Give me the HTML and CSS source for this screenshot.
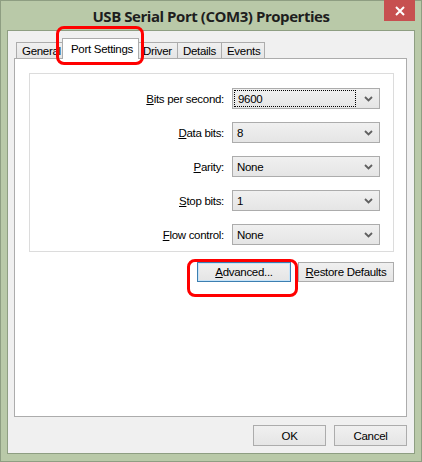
FILE: index.html
```html
<!DOCTYPE html>
<html>
<head>
<meta charset="utf-8">
<link rel="stylesheet" href="styles.css">
</head>
<body>
<div class="window">
  <div class="titlebar">
    <div class="title">USB Serial Port (COM3) Properties</div>
    <div class="close"><svg width="10" height="10" viewBox="0 0 10 10"><path d="M1 1 L9 9 M9 1 L1 9" stroke="#fff" stroke-width="2"/></svg></div>
  </div>
  <div class="client">
    <div class="tabs">
      <div class="tab t-general">General</div>
      <div class="tab selected">Port Settings</div>
      <div class="tab t-driver">Driver</div>
      <div class="tab t-details">Details</div>
      <div class="tab t-events">Events</div>
      <div class="mark mark-tab"></div>
    </div>
    <div class="panel">
      <div class="group">
        <label class="lbl"><u>B</u>its per second:</label>
        <div class="combo focus"><span class="val">9600</span><svg class="chev" width="9" height="6" viewBox="0 0 9 6"><path d="M1 1 L4.5 4.5 L8 1" fill="none" stroke="#606060" stroke-width="1.8"/></svg></div>
        <label class="lbl"><u>D</u>ata bits:</label>
        <div class="combo"><span class="val">8</span><svg class="chev" width="9" height="6" viewBox="0 0 9 6"><path d="M1 1 L4.5 4.5 L8 1" fill="none" stroke="#606060" stroke-width="1.8"/></svg></div>
        <label class="lbl"><u>P</u>arity:</label>
        <div class="combo"><span class="val">None</span><svg class="chev" width="9" height="6" viewBox="0 0 9 6"><path d="M1 1 L4.5 4.5 L8 1" fill="none" stroke="#606060" stroke-width="1.8"/></svg></div>
        <label class="lbl"><u>S</u>top bits:</label>
        <div class="combo"><span class="val">1</span><svg class="chev" width="9" height="6" viewBox="0 0 9 6"><path d="M1 1 L4.5 4.5 L8 1" fill="none" stroke="#606060" stroke-width="1.8"/></svg></div>
        <label class="lbl"><u>F</u>low control:</label>
        <div class="combo"><span class="val">None</span><svg class="chev" width="9" height="6" viewBox="0 0 9 6"><path d="M1 1 L4.5 4.5 L8 1" fill="none" stroke="#606060" stroke-width="1.8"/></svg></div>
      </div>
      <div class="panel-buttons">
        <div class="btn-wrap">
          <button class="btn default"><u>A</u>dvanced...</button>
          <div class="mark mark-btn"></div>
        </div>
        <button class="btn restore"><u>R</u>estore Defaults</button>
      </div>
    </div>
    <div class="dialog-buttons">
      <button class="btn dlg">OK</button>
      <button class="btn dlg">Cancel</button>
    </div>
  </div>
</div>
</body>
</html>
```
FILE: styles.css
```css
* { box-sizing: border-box; }
html, body { margin: 0; padding: 0; }
body {
  width: 422px;
  height: 462px;
  background: #b9c9a8;
  font-family: "Liberation Sans", Arial, sans-serif;
  font-size: 11.5px;
  letter-spacing: -0.3px;
  color: #000;
  overflow: hidden;
}
.window {
  position: relative;
  width: 422px;
  height: 462px;
  border: 1px solid #8e9e82;
  background: #b9c9a8;
  display: flex;
  flex-direction: column;
}
.titlebar {
  height: 29px;
  display: flex;
  align-items: center;
  justify-content: center;
}
.title {
  font-family: "Open Sans", sans-serif;
  font-weight: 700;
  font-size: 15px;
  color: #1e1e1e;
  letter-spacing: -0.45px;
  margin-top: 1px;
}
.close {
  position: absolute;
  top: -1px;
  right: 6px;
  width: 31px;
  height: 21px;
  background: #c75050;
  display: flex;
  align-items: center;
  justify-content: center;
}
.client {
  margin: 0 6px 7px 6px;
  flex: 1;
  border: 1px solid #8e9e82;
  background: #f0f0f0;
  display: flex;
  flex-direction: column;
  padding: 0 7px 7px 6px;
}
.tabs {
  position: relative;
  height: 27px;
  display: flex;
  align-items: flex-end;
  padding-left: 2px;
}
.tab {
  height: 16px;
  border: 1px solid #acacac;
  border-bottom: none;
  background: linear-gradient(#f0f0f0, #e5e5e5);
  padding: 1px 0 0 6px;
  line-height: 14px;
  white-space: nowrap;
  overflow: hidden;
  flex: none;
}
.t-general { width: 50px; padding-left: 5px; }
.tab.selected {
  position: relative;
  z-index: 2;
  width: 77px;
  height: 21px;
  margin: 0 -2px -1px -4px;
  padding: 3px 0 0 8px;
  background: #fff;
}
.t-driver { width: 41px; padding-left: 5px; }
.t-details { width: 45px; margin-left: -1px; padding-left: 5px; }
.t-events { width: 44px; margin-left: -1px; padding-left: 5px; }
.mark {
  position: absolute;
  border: 3px solid #f00;
  border-radius: 8px;
  z-index: 5;
  pointer-events: none;
}
.mark-tab {
  left: 42px;
  top: -5px;
  width: 88px;
  height: 39px;
}
.panel {
  height: 359px;
  border: 1px solid #acacac;
  background: #fff;
  padding: 14px 12px 0 14px;
}
.group {
  height: 179px;
  border: 1px solid #dcdcdc;
  display: grid;
  grid-template-columns: 1fr 148px;
  grid-auto-rows: 21px;
  row-gap: 13px;
  column-gap: 8px;
  align-items: center;
  padding: 14px 13px 0 0;
  align-content: start;
}
.lbl {
  justify-self: end;
  white-space: nowrap;
}
.combo {
  height: 21px;
  border: 1px solid #acacac;
  background: linear-gradient(#f0f0f0, #e5e5e5);
  display: flex;
  align-items: center;
  padding: 0 6px 0 4px;
  position: relative;
}
.combo .val { flex: 1; }
.combo.focus .val {
  margin: 1px 8px 1px -3px;
  padding-left: 3px;
  height: 17px;
  line-height: 16px;
  border: 1px dotted #000;
}
.chev { flex: none; }
.panel-buttons {
  display: flex;
  justify-content: flex-end;
  gap: 7px;
  margin-top: 10px;
}
.btn-wrap { position: relative; display: flex; }
.btn {
  font-family: inherit;
  font-size: 11.5px;
  letter-spacing: -0.3px;
  color: #000;
  height: 20px;
  border: 1px solid #acacac;
  background: linear-gradient(#f0f0f0, #e5e5e5);
  padding: 0;
  margin: 0;
}
.btn.default {
  width: 94px;
  border-color: #3c7fb1;
  box-shadow: inset 0 0 0 1px #c8e4f8;
}
.btn.restore { width: 96px; }
.mark-btn {
  left: -10px;
  top: -3px;
  width: 111px;
  height: 38px;
}
.dialog-buttons {
  display: flex;
  justify-content: flex-end;
  gap: 8px;
  margin-top: 8px;
}
.btn.dlg { width: 73px; height: 21px; }
```
